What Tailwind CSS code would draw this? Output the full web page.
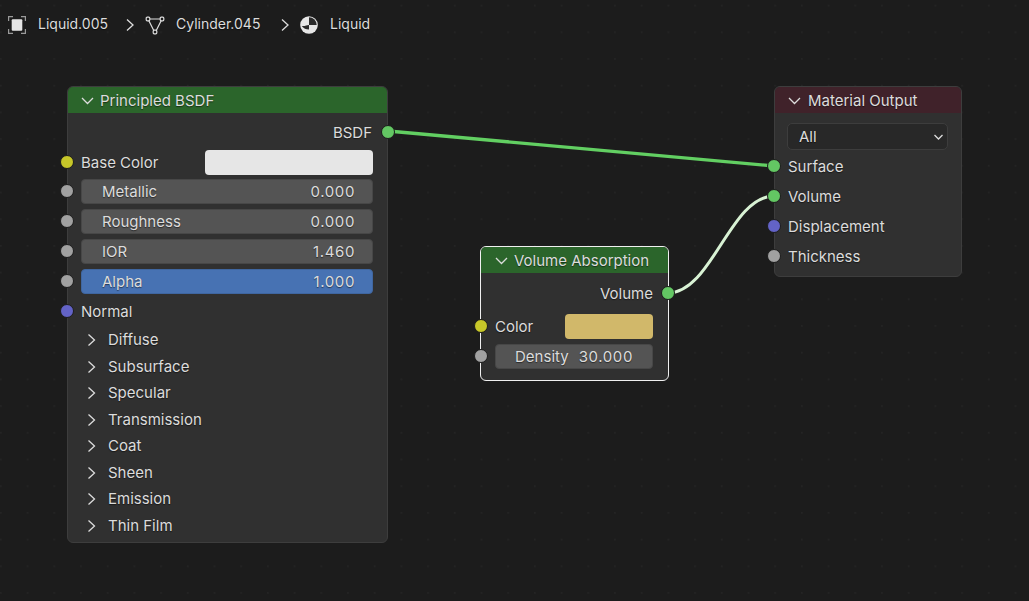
<!DOCTYPE html>
<html lang="en">
  <head>
    <meta charset="UTF-8" />
    <title>Shader Editor</title>
    <script src="https://cdn.jsdelivr.net/npm/@tailwindcss/browser@4"></script>
  </head>
  <body class="bg-[#1c1c1c]">
    <div class="relative w-[1029px] h-[601px] overflow-hidden bg-[#1c1c1c] text-[#dcdcdc] text-[15px] leading-[20px] [text-shadow:0_1px_1px_rgba(0,0,0,0.5)] [font-family:Inter,sans-serif]">
      <!-- dot grid and wires -->
      <svg class="absolute inset-0" width="1029" height="601">
        <defs>
          <pattern id="dots" x="0" y="4.7" width="26.7" height="26.7" patternUnits="userSpaceOnUse">
            <rect x="0.3" y="0.3" width="1.2" height="1.2" fill="#2c2c2c" />
          </pattern>
        </defs>
        <rect width="1029" height="601" fill="url(#dots)" />
        <path d="M388 131 L774 166" stroke="#62cf62" stroke-width="3.4" fill="none" />
        <path d="M668 293 C712 293 730 196 774 196" stroke="#d8f2d4" stroke-width="3" fill="none" />
      </svg>

      <!-- breadcrumb -->
      <div class="relative flex items-center h-[24px] mt-[12px] pl-[8px] text-[14px]">
        <svg class="w-[18px] h-[18px] mr-[12px] mt-[1px]" viewBox="0 0 18 18" fill="none">
          <path d="M.6 5V.6H5M13 .6H17.4V5M17.4 13V17.4H13M5 17.4H.6V13" stroke="#9a9a9a" stroke-width="1.2" />
          <rect x="3.7" y="3.3" width="10.6" height="11.4" rx="1" fill="#e6e6e6" />
        </svg>
        <span class="w-[87px]">Liquid.005</span>
        <svg class="w-[10px] h-[14px] mr-[10px] mt-[2px]" viewBox="0 0 10 14" fill="none"><path d="M2 1.5L8 7L2 12.5" stroke="#dcdcdc" stroke-width="1.3" /></svg>
        <svg class="w-[20px] h-[20px] mr-[11px] mt-[1px]" viewBox="0 0 20 20" fill="none">
          <path d="M3 4H17L10 18Z" stroke="#dcdcdc" stroke-width="1.2" />
          <rect x="1.2" y="2.2" width="3.6" height="3.6" rx="1" fill="#1c1c1c" stroke="#dcdcdc" stroke-width="1.2" />
          <rect x="15.2" y="2.2" width="3.6" height="3.6" rx="1" fill="#1c1c1c" stroke="#dcdcdc" stroke-width="1.2" />
          <rect x="8.2" y="15.2" width="3.6" height="3.6" rx="1" fill="#1c1c1c" stroke="#dcdcdc" stroke-width="1.2" />
        </svg>
        <span class="w-[104px] whitespace-nowrap">Cylinder.045</span>
        <svg class="w-[10px] h-[14px] mr-[10px] mt-[2px]" viewBox="0 0 10 14" fill="none"><path d="M2 1.5L8 7L2 12.5" stroke="#dcdcdc" stroke-width="1.3" /></svg>
        <svg class="w-[18px] h-[18px] mr-[12px] mt-[2px]" viewBox="0 0 18 18">
          <circle cx="9" cy="9" r="8.8" fill="#e6e6e6" />
          <path d="M9 1.3A7.7 7.7 0 0 1 16.7 9H9Z" fill="#2a2a2a" />
          <path d="M1.8 10C5 10.5 6.5 9 9 9V13.5C6 13.5 3.5 12.5 1.8 10Z" fill="#2a2a2a" />
        </svg>
        <span>Liquid</span>
      </div>

      <!-- Principled BSDF -->
      <div class="absolute left-[67px] top-[86px] w-[321px] h-[457px] bg-[#303030] rounded-[6px] border border-[#3d3d3d]">
        <div class="flex items-center h-[26px] pl-[13px] pt-[2px] gap-[6px] bg-[#2b652b] rounded-t-[5px]">
          <svg class="w-[13px] h-[10px]" viewBox="0 0 13 10" fill="none"><path d="M1 2L6.5 7.5L12 2" stroke="#dcdcdc" stroke-width="1.3" /></svg>
          <span>Principled BSDF</span>
        </div>
        <div class="h-[37px] pr-[15px] pt-[10px] text-right">BSDF</div>
        <div class="flex items-center h-[25px] pl-[13px] pr-[14px] justify-between">
          <span>Base Color</span>
          <div class="w-[168px] h-[25px] rounded-[4px] bg-[#e6e6e6]"></div>
        </div>
        <div class="flex flex-col gap-[5px] mt-[4px] ml-[13px] mr-[14px]">
          <div class="flex items-center justify-between h-[25px] pl-[20px] pr-[17px] rounded-[4px] bg-[#545454] border border-[#474747]"><span>Metallic</span><span class="tracking-[0.6px]">0.000</span></div>
          <div class="flex items-center justify-between h-[25px] pl-[20px] pr-[17px] rounded-[4px] bg-[#545454] border border-[#474747]"><span>Roughness</span><span class="tracking-[0.6px]">0.000</span></div>
          <div class="flex items-center justify-between h-[25px] pl-[20px] pr-[17px] rounded-[4px] bg-[#545454] border border-[#474747]"><span>IOR</span><span class="tracking-[0.6px]">1.460</span></div>
          <div class="flex items-center justify-between h-[25px] pl-[20px] pr-[17px] rounded-[4px] bg-[#4772b3] border border-[#3f66a0]"><span>Alpha</span><span class="tracking-[0.6px]">1.000</span></div>
        </div>
        <div class="flex items-center h-[20px] pl-[13px] mt-[8px]">Normal</div>
        <div class="flex flex-col gap-[6.5px] mt-[8px] pl-[19px]">
          <div class="flex items-center h-[20px] gap-[12px]"><svg class="w-[9px] h-[14px]" viewBox="0 0 9 14" fill="none"><path d="M1.5 1.5L7.5 7L1.5 12.5" stroke="#dcdcdc" stroke-width="1.3" /></svg><span>Diffuse</span></div>
          <div class="flex items-center h-[20px] gap-[12px]"><svg class="w-[9px] h-[14px]" viewBox="0 0 9 14" fill="none"><path d="M1.5 1.5L7.5 7L1.5 12.5" stroke="#dcdcdc" stroke-width="1.3" /></svg><span>Subsurface</span></div>
          <div class="flex items-center h-[20px] gap-[12px]"><svg class="w-[9px] h-[14px]" viewBox="0 0 9 14" fill="none"><path d="M1.5 1.5L7.5 7L1.5 12.5" stroke="#dcdcdc" stroke-width="1.3" /></svg><span>Specular</span></div>
          <div class="flex items-center h-[20px] gap-[12px]"><svg class="w-[9px] h-[14px]" viewBox="0 0 9 14" fill="none"><path d="M1.5 1.5L7.5 7L1.5 12.5" stroke="#dcdcdc" stroke-width="1.3" /></svg><span>Transmission</span></div>
          <div class="flex items-center h-[20px] gap-[12px]"><svg class="w-[9px] h-[14px]" viewBox="0 0 9 14" fill="none"><path d="M1.5 1.5L7.5 7L1.5 12.5" stroke="#dcdcdc" stroke-width="1.3" /></svg><span>Coat</span></div>
          <div class="flex items-center h-[20px] gap-[12px]"><svg class="w-[9px] h-[14px]" viewBox="0 0 9 14" fill="none"><path d="M1.5 1.5L7.5 7L1.5 12.5" stroke="#dcdcdc" stroke-width="1.3" /></svg><span>Sheen</span></div>
          <div class="flex items-center h-[20px] gap-[12px]"><svg class="w-[9px] h-[14px]" viewBox="0 0 9 14" fill="none"><path d="M1.5 1.5L7.5 7L1.5 12.5" stroke="#dcdcdc" stroke-width="1.3" /></svg><span>Emission</span></div>
          <div class="flex items-center h-[20px] gap-[12px]"><svg class="w-[9px] h-[14px]" viewBox="0 0 9 14" fill="none"><path d="M1.5 1.5L7.5 7L1.5 12.5" stroke="#dcdcdc" stroke-width="1.3" /></svg><span>Thin Film</span></div>
        </div>
        <!-- sockets -->
        <span class="absolute left-[313px] top-[38px] w-[14px] h-[14px] rounded-full bg-[#63c763] border border-[#1c1c1c]"></span>
        <span class="absolute left-[-8px] top-[68px] w-[14px] h-[14px] rounded-full bg-[#c7c729] border border-[#1c1c1c]"></span>
        <span class="absolute left-[-8px] top-[97px] w-[14px] h-[14px] rounded-full bg-[#a1a1a1] border border-[#1c1c1c]"></span>
        <span class="absolute left-[-8px] top-[127px] w-[14px] h-[14px] rounded-full bg-[#a1a1a1] border border-[#1c1c1c]"></span>
        <span class="absolute left-[-8px] top-[157px] w-[14px] h-[14px] rounded-full bg-[#a1a1a1] border border-[#1c1c1c]"></span>
        <span class="absolute left-[-8px] top-[187px] w-[14px] h-[14px] rounded-full bg-[#a1a1a1] border border-[#1c1c1c]"></span>
        <span class="absolute left-[-8px] top-[217px] w-[14px] h-[14px] rounded-full bg-[#6363c7] border border-[#1c1c1c]"></span>
      </div>

      <!-- Volume Absorption -->
      <div class="absolute left-[480px] top-[246px] w-[189px] h-[135px] bg-[#303030] rounded-[6px] border border-[#f0f0f0]">
        <div class="flex items-center h-[26px] pl-[14px] pt-[2px] gap-[6px] bg-[#2b652b] rounded-t-[5px]">
          <svg class="w-[13px] h-[10px]" viewBox="0 0 13 10" fill="none"><path d="M1 2L6.5 7.5L12 2" stroke="#dcdcdc" stroke-width="1.3" /></svg>
          <span>Volume Absorption</span>
        </div>
        <div class="h-[41px] pr-[15px] pt-[11px] text-right">Volume</div>
        <div class="flex items-center justify-between h-[25px] pl-[14px] pr-[15px]">
          <span>Color</span>
          <div class="w-[88px] h-[25px] rounded-[4px] bg-[#d1b86a]"></div>
        </div>
        <div class="flex items-center justify-center gap-[10px] h-[25px] mt-[5px] ml-[14px] mr-[15px] rounded-[4px] bg-[#545454] border border-[#474747]"><span>Density</span><span class="tracking-[0.6px]">30.000</span></div>
        <span class="absolute left-[180px] top-[39px] w-[14px] h-[14px] rounded-full bg-[#63c763] border border-[#1c1c1c]"></span>
        <span class="absolute left-[-7px] top-[72px] w-[14px] h-[14px] rounded-full bg-[#c7c729] border border-[#1c1c1c]"></span>
        <span class="absolute left-[-7px] top-[102px] w-[14px] h-[14px] rounded-full bg-[#a1a1a1] border border-[#1c1c1c]"></span>
      </div>

      <!-- Material Output -->
      <div class="absolute left-[774px] top-[86px] w-[188px] h-[191px] bg-[#303030] rounded-[6px] border border-[#3d3d3d]">
        <div class="flex items-center h-[26px] pl-[13px] pt-[2px] gap-[7px] bg-[#40222a] rounded-t-[5px]">
          <svg class="w-[13px] h-[10px]" viewBox="0 0 13 10" fill="none"><path d="M1 2L6.5 7.5L12 2" stroke="#dcdcdc" stroke-width="1.3" /></svg>
          <span>Material Output</span>
        </div>
        <div class="flex items-center justify-between h-[27px] mt-[10px] ml-[12px] mr-[13px] pl-[11px] pr-[3px] rounded-[5px] bg-[#282828] border border-[#3d3d3d]">
          <span>All</span>
          <svg class="w-[11px] h-[8px]" viewBox="0 0 11 8" fill="none"><path d="M1.5 2L5.5 6L9.5 2" stroke="#dcdcdc" stroke-width="1.3" /></svg>
        </div>
        <div class="flex flex-col gap-[10px] mt-[7px] pl-[13px]">
          <div>Surface</div>
          <div>Volume</div>
          <div>Displacement</div>
          <div>Thickness</div>
        </div>
        <span class="absolute left-[-8px] top-[72px] w-[14px] h-[14px] rounded-full bg-[#63c763] border border-[#1c1c1c]"></span>
        <span class="absolute left-[-8px] top-[102px] w-[14px] h-[14px] rounded-full bg-[#63c763] border border-[#1c1c1c]"></span>
        <span class="absolute left-[-8px] top-[132px] w-[14px] h-[14px] rounded-full bg-[#6363c7] border border-[#1c1c1c]"></span>
        <span class="absolute left-[-8px] top-[162px] w-[14px] h-[14px] rounded-full bg-[#a1a1a1] border border-[#1c1c1c]"></span>
      </div>
    </div>
  </body>
</html>
